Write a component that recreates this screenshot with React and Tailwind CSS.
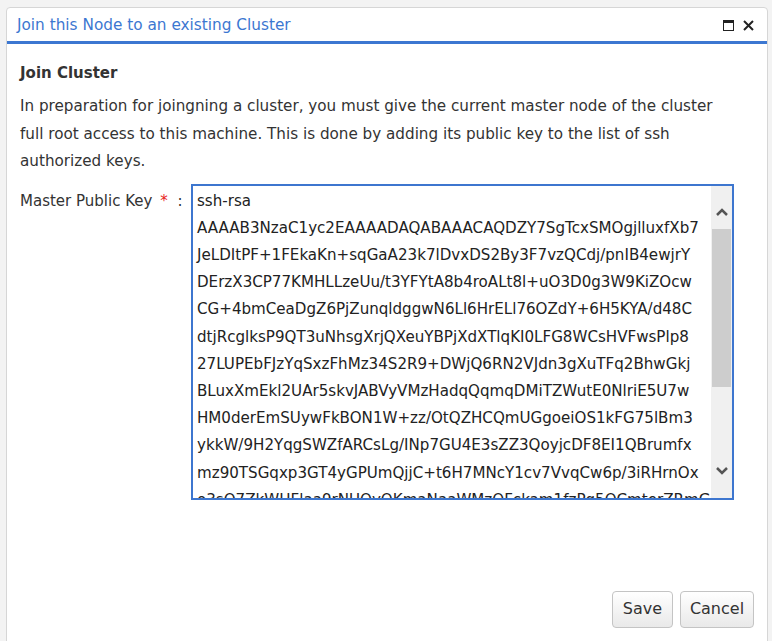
const keyLines = [
  'ssh-rsa',
  'AAAAB3NzaC1yc2EAAAADAQABAAACAQDZY7SgTcxSMOgjlluxfXb7',
  'JeLDItPF+1FEkaKn+sqGaA23k7lDvxDS2By3F7vzQCdj/pnIB4ewjrY',
  'DErzX3CP77KMHLLzeUu/t3YFYtA8b4roALt8l+uO3D0g3W9KiZOcw',
  'CG+4bmCeaDgZ6PjZunqldggwN6Ll6HrELl76OZdY+6H5KYA/d48C',
  'dtjRcglksP9QT3uNhsgXrjQXeuYBPjXdXTlqKI0LFG8WCsHVFwsPlp8',
  '27LUPEbFJzYqSxzFhMz34S2R9+DWjQ6RN2VJdn3gXuTFq2BhwGkj',
  'BLuxXmEkl2UAr5skvJABVyVMzHadqQqmqDMiTZWutE0NlriE5U7w',
  'HM0derEmSUywFkBON1W+zz/OtQZHCQmUGgoeiOS1kFG75lBm3',
  'ykkW/9H2YqgSWZfARCsLg/INp7GU4E3sZZ3QoyjcDF8EI1QBrumfx',
  'mz90TSGqxp3GT4yGPUmQjjC+t6H7MNcY1cv7VvqCw6p/3iRHrnOx',
  'o3sQ7ZkWHFlaa9rNUQyOKmaNaaWMzQFckam1fzPq5QCmterZRmGKa',
]

function App() {
  return (
    <div
      className="w-[772px] h-[641px] overflow-hidden bg-[#f3f3f3] pl-[6px] pt-[7px] pr-[4px] text-[#333]"
      style={{ fontFamily: '"DejaVu Sans", Verdana, sans-serif' }}
    >
      <div className="h-[700px] bg-white border border-[#d6d6d6] rounded-t-[4px] flex flex-col">
        <div className="h-[36px] shrink-0 flex items-center justify-between pl-[10px] pr-[13px] border-b-[3px] border-[#3c77d1]">
          <span className="text-[15.3px] text-[#3c77d1] pt-[2px]">Join this Node to an existing Cluster</span>
          <div className="flex items-center gap-[9px] pt-[2px]">
            <div className="w-[11px] h-[11px] border-[1.5px] border-t-[3px] border-[#222]" />
            <svg width="11" height="11" viewBox="0 0 11 11">
              <path d="M1 1 L10 10 M10 1 L1 10" stroke="#222" strokeWidth="2" />
            </svg>
          </div>
        </div>

        <div className="px-[13px]">
          <h2 className="mt-[19px] text-[15px] leading-[20px] font-bold text-[#333]">Join Cluster</h2>
          <p className="mt-[10px] text-[15.2px] leading-[27.5px] whitespace-nowrap">
            In preparation for joingning a cluster, you must give the current master node of the cluster
            <br />
            full root access to this machine. This is done by adding its public key to the list of ssh
            <br />
            authorized keys.
          </p>

          <div className="mt-[8px] flex items-start">
            <label className="w-[171px] shrink-0 text-[15px] leading-[27px] pt-[4px]">
              Master Public Key <span className="text-[#e8241c] ml-[3px]">*</span> <span className="ml-[5px]">:</span>
            </label>
            <div className="w-[543px] h-[316px] border-2 border-[#3d76cf] flex overflow-hidden">
              <div className="flex-1 pl-[4px] pt-[2px] text-[15.1px] leading-[27.2px] text-[#222] whitespace-nowrap overflow-hidden">
                {keyLines.map((l, i) => (
                  <div key={i}>{l}</div>
                ))}
              </div>
              <div className="w-[21px] shrink-0 bg-[#f0f0f0] flex flex-col items-center">
                <svg width="14" height="10" viewBox="0 0 14 10" className="mt-[21px]">
                  <path d="M2 8 L7 3 L12 8" fill="none" stroke="#555" strokeWidth="2.5" />
                </svg>
                <div className="mt-[12px] w-[19px] h-[158px] bg-[#cdcdcd]" />
                <svg width="14" height="10" viewBox="0 0 14 10" className="mt-[79px]">
                  <path d="M2 2 L7 7 L12 2" fill="none" stroke="#555" strokeWidth="2.5" />
                </svg>
              </div>
            </div>
          </div>

          <div className="mt-[91px] flex justify-end gap-[7px]">
            <button className="w-[61px] h-[37px] rounded-[4px] border border-[#c4c4c4] bg-gradient-to-b from-white to-[#e9e9e9] text-[16px] text-[#333]">
              Save
            </button>
            <button className="w-[74px] h-[37px] rounded-[4px] border border-[#c4c4c4] bg-gradient-to-b from-white to-[#e9e9e9] text-[16px] text-[#333]">
              Cancel
            </button>
          </div>
        </div>
      </div>
    </div>
  )
}

export default App
